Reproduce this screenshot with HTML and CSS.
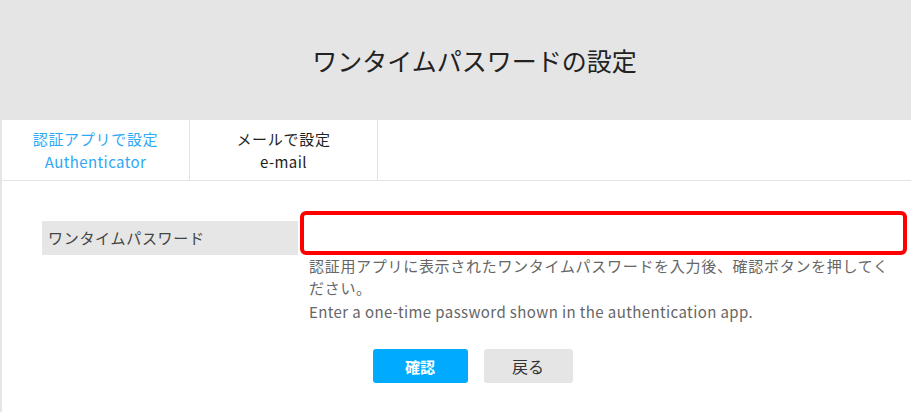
FILE: index.html
```html
<!DOCTYPE html>
<html lang="ja">
<head>
    <meta charset="UTF-8">
    <meta name="viewport" content="width=device-width, initial-scale=1.0">
    <title>ワンタイムパスワードの設定</title>
    <link rel="stylesheet" href="styles.css">
</head>
<body>
    <header class="page-header">
        <h1>ワンタイムパスワードの設定</h1>
    </header>

    <div class="content">
        <!-- 設定方法の切り替え -->
        <nav class="tabs">
            <a class="tab active" href="#">
                <span>認証アプリで設定</span>
                <span class="en">Authenticator</span>
            </a>
            <a class="tab" href="#">
                <span>メールで設定</span>
                <span class="en">e-mail</span>
            </a>
        </nav>

        <form class="otp-form" action="#" method="POST">
            <div class="form-row">
                <label for="otp" class="form-label">ワンタイムパスワード</label>
                <div class="form-field">
                    <input type="text" id="otp" name="otp" autocomplete="one-time-code">
                    <div class="hint">
                        <p class="hint-ja">認証用アプリに表示されたワンタイムパスワードを入力後、確認ボタンを押してください。</p>
                        <p class="hint-en en">Enter a one-time password shown in the authentication app.</p>
                    </div>
                </div>
            </div>

            <div class="actions">
                <button type="submit" class="btn btn-primary">確認</button>
                <button type="button" class="btn btn-back">戻る</button>
            </div>
        </form>
    </div>
</body>
</html>
```

FILE: styles.css
```css
body {
    margin: 0;
    font-family: "Noto Sans CJK JP", "Noto Sans", sans-serif;
    font-size: 15px;
    letter-spacing: 0.7px;
    color: #222;
    background: #fff;
}
.en {
    letter-spacing: 0.4px;
}
.page-header {
    height: 120px;
    background-color: #e5e5e5;
    display: flex;
    align-items: center;
    justify-content: center;
    padding-left: 38px;
}
.page-header h1 {
    margin: 0;
    font-size: 25px;
    font-weight: normal;
    letter-spacing: 0;
    color: #222;
}
.content {
    border-left: 2px solid #e5e5e5;
    min-height: 292px;
}
.tabs {
    display: flex;
    height: 60px;
    border-bottom: 1px solid #e3e3e3;
}
.tab {
    box-sizing: border-box;
    width: 188px;
    display: flex;
    flex-direction: column;
    align-items: center;
    justify-content: center;
    text-align: center;
    line-height: 23px;
    border-right: 1px solid #e3e3e3;
    color: #222;
    text-decoration: none;
}
.tab.active {
    color: #2fa8f5;
}
.otp-form {
    padding: 30px 4px 0 40px;
}
.form-row {
    display: flex;
    gap: 2px;
}
.form-label {
    box-sizing: border-box;
    width: 256px;
    height: 34px;
    margin-top: 10px;
    padding-left: 6px;
    line-height: 34px;
    background-color: #e6e6e6;
    color: #444;
}
.form-field {
    flex: 1;
}
.form-field input {
    display: block;
    box-sizing: border-box;
    width: 100%;
    height: 44px;
    border: 4px solid #f00;
    border-radius: 6px;
    outline: none;
    padding: 0 8px;
    font-size: 15px;
}
.hint {
    padding-left: 9px;
    max-width: 592px;
    color: #666;
    line-height: 22px;
}
.hint p {
    margin: 0;
}
.hint-en {
    margin-top: 2px !important;
}
.actions {
    display: flex;
    justify-content: center;
    gap: 16px;
    margin-top: 26px;
    margin-left: -4px;
}
.btn {
    height: 34px;
    border: none;
    border-radius: 3px;
    font-family: inherit;
    letter-spacing: 0;
    cursor: pointer;
}
.btn-primary {
    width: 95px;
    background-color: #00aaff;
    color: #fff;
    font-weight: bold;
    font-size: 15px;
}
.btn-back {
    width: 89px;
    background-color: #e5e5e5;
    color: #333;
    font-size: 16px;
}
```
